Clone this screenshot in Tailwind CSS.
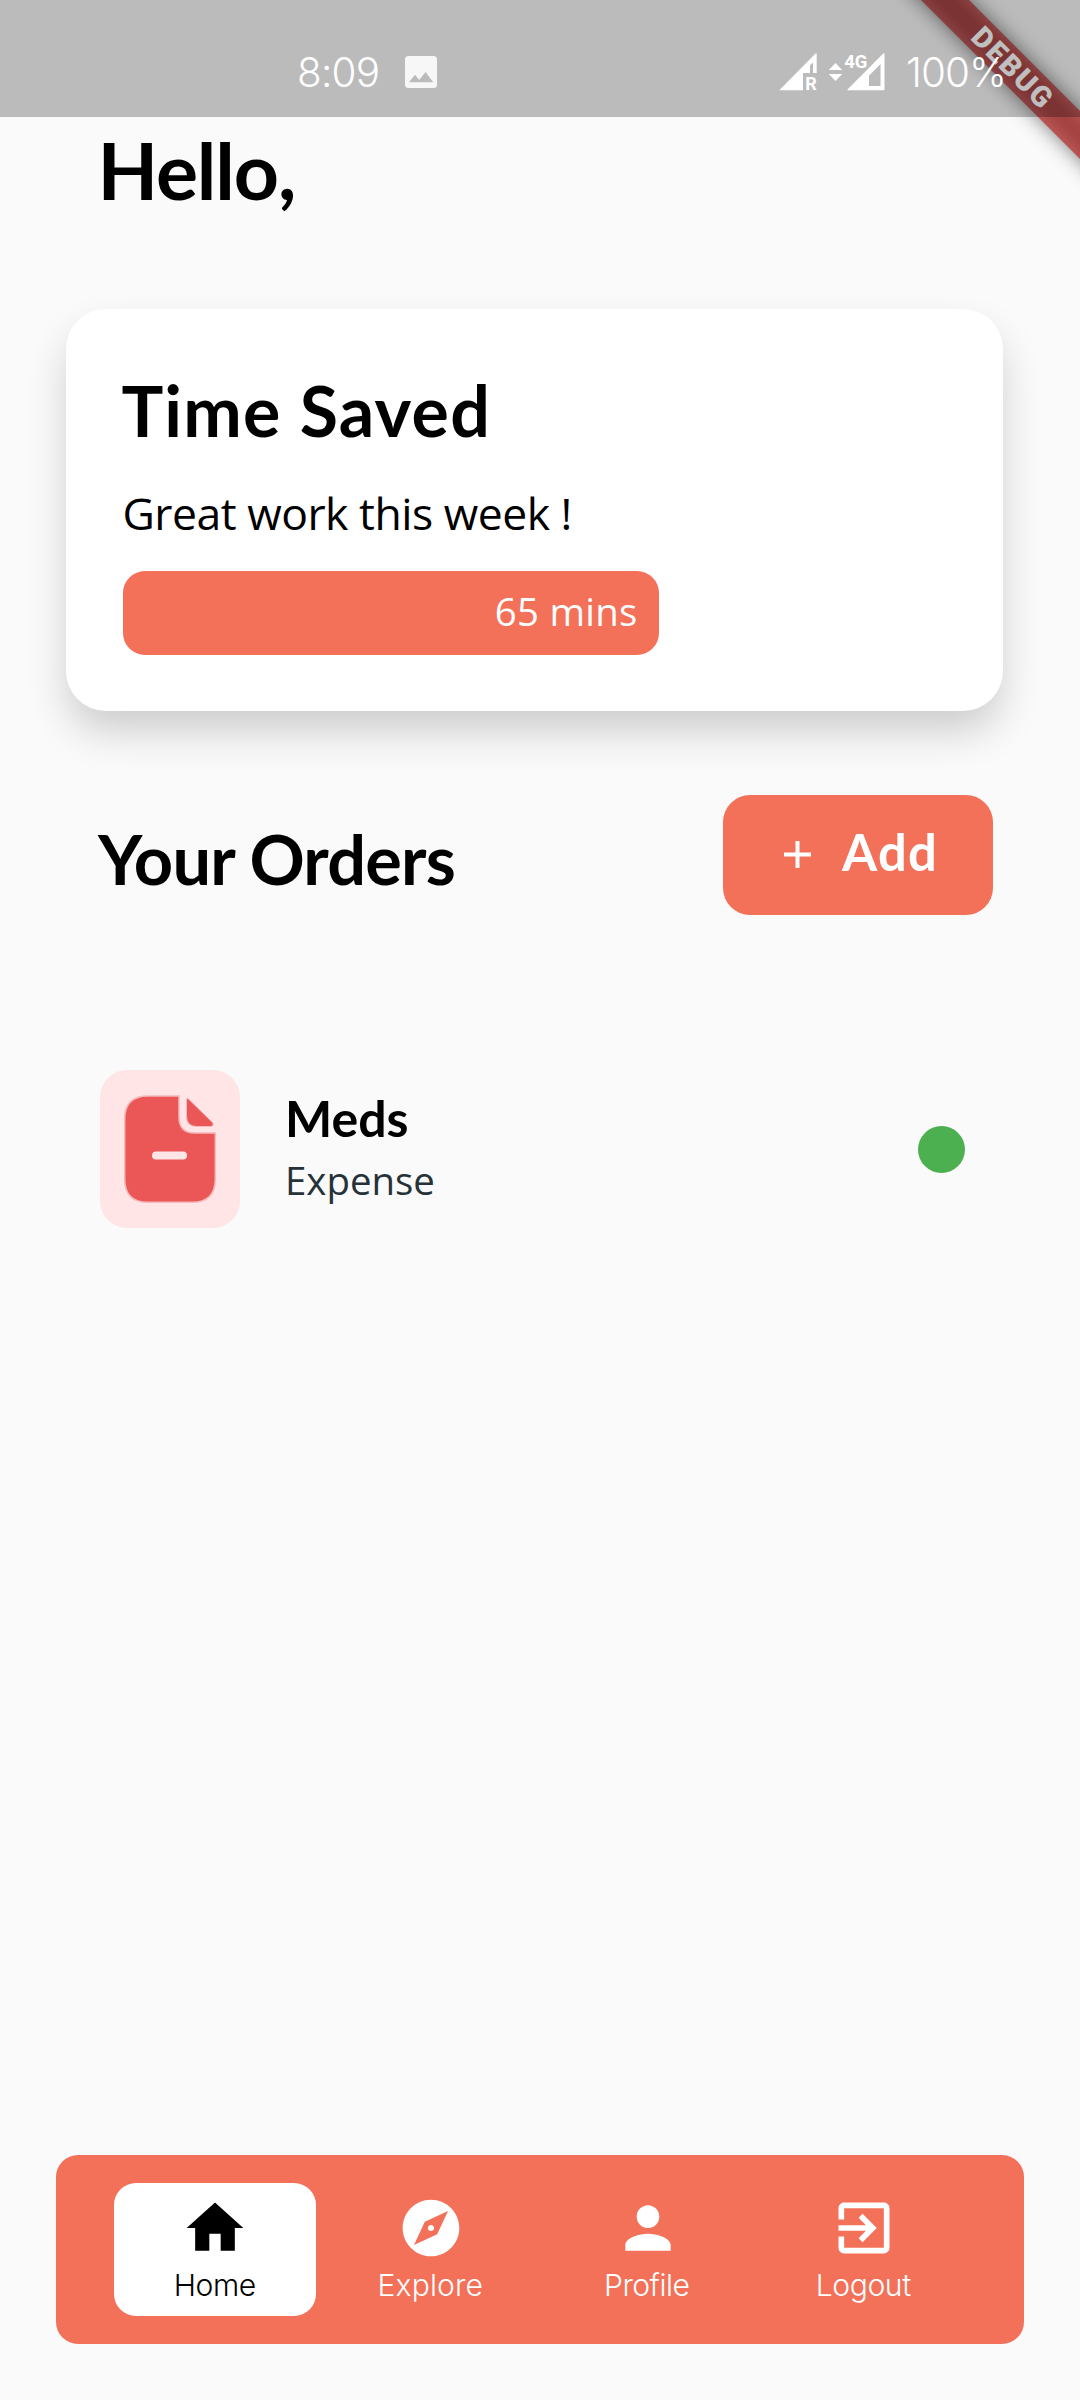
<!DOCTYPE html>
<html lang="en">
<head>
<meta charset="utf-8">
<title>Home</title>
<script src="https://cdn.jsdelivr.net/npm/@tailwindcss/browser@4"></script>
</head>
<body class="bg-[#fafafa] text-black">
<div class="relative flex h-[2400px] w-[1080px] flex-col overflow-hidden font-['Open_Sans',sans-serif]">

  <!-- Debug ribbon -->
  <div class="absolute left-[813px] top-[51px] h-[34px] w-[400px] rotate-45">
    <div class="absolute inset-0 bg-black/50 blur-[10px]"></div>
    <div class="absolute inset-0 flex items-center justify-center bg-[#b71c1c]/63 font-['Roboto',sans-serif] text-[29px] leading-none font-black tracking-[2px] text-white">DEBUG</div>
  </div>

  <!-- Status bar -->
  <header class="relative flex h-[117px] shrink-0 items-start bg-black/25 pt-[48px] pl-[297px] font-['Inter',sans-serif] text-[40.4px] leading-[49px] font-light text-white">
    <span class="w-[108px] tracking-[-0.8px]">8:09</span>
    <svg class="mt-2 size-8" viewBox="0 0 32 32"><path fill="#f7f7f7" fill-rule="evenodd" d="M3.5 0h25A3.5 3.5 0 0 1 32 3.500v25a3.500 3.500 0 0 1-3.500 3.500h-25A3.500 3.500 0 0 1 0 28.500v-25A3.500 3.500 0 0 1 3.500 0zM4 26.300h24.300L20.500 16l-6.300 8-4.200-5.300z"/></svg>
    <svg class="mt-[3px] ml-[342px] h-[48px] w-[110px]" viewBox="780 51 110 48" fill="#fff">
      <path fill-rule="evenodd" d="M780.500 90 816.500 53.500Q817.700 52.500 817.700 54.500V73H814V62.500L811 65.500V73H804V90.300H781Q779.700 90.300 780.500 90z"/>
      <text x="806.300" y="90.300" font-family="Roboto" font-weight="700" font-size="18">R</text>
      <path d="M836.500 63l6.700 7h-13.400zM829.800 74h13.400l-6.700 7z"/>
      <text x="845.300" y="67.500" font-family="Roboto" font-weight="700" font-size="18.500" textLength="23">4G</text>
      <path fill-rule="evenodd" d="M848.500 89.500 884 53.700Q885.500 52.500 885.500 54.500V89Q885.500 90.300 884 90.300H849Q848 90.300 848.500 89.500zM870 75.700V86H881.500V64z"/>
    </svg>
    <span class="ml-[17px] tracking-[-0.9px]">100%</span>
  </header>

  <main class="relative flex flex-col">
    <h1 class="mt-[5px] ml-[97.5px] font-['Lato',sans-serif] text-[78.8px] leading-[95px] font-bold tracking-[-1.1px]">Hello,</h1>

    <section class="mt-[92px] ml-[66px] h-[402px] w-[937px] rounded-[40px] bg-white pt-[59px] pl-[56.5px] shadow-[0_22px_42px_-3px_rgba(0,0,0,0.19)]">
      <h2 class="-ml-px font-['Lato',sans-serif] text-[69.9px] leading-[84px] font-bold tracking-[1.2px]">Time Saved</h2>
      <p class="mt-[30px] text-[44.5px] leading-[61px] tracking-[-0.5px]">Great work this week !</p>
      <div class="mt-[28px] flex h-[84px] w-[536px] items-center justify-end rounded-[22px] bg-[#f37159] pr-[21px] pb-1 text-[38.4px] leading-[52px] tracking-[0.25px] text-white">65 mins</div>
    </section>

    <div class="mt-[83.5px] flex h-[120px] items-start justify-between pr-[87px] pl-[98px]">
      <h2 class="mt-[22.5px] font-['Lato',sans-serif] text-[68.5px] leading-[83px] font-bold tracking-[-0.8px]">Your Orders</h2>
      <button class="flex h-[120px] w-[270px] items-center gap-[31px] rounded-[27px] bg-[#f37159] pl-[61px] text-white">
        <svg class="size-[27px]" viewBox="0 0 27 27"><path d="M13.500 0v27M0 13.500h27" stroke="#fff" stroke-width="4"/></svg>
        <span class="mb-[6px] font-['Lato',sans-serif] text-[50.7px] leading-[61px] font-bold tracking-[1.29px]">Add</span>
      </button>
    </div>

    <article class="mt-[155.5px] flex h-[158px] items-center pr-[115px] pl-[100px]">
      <div class="flex h-[158px] w-[140px] items-center justify-center rounded-[27px] bg-[#ffe5e6]">
        <svg class="h-[108px] w-[92px]" viewBox="0 0 92 108" fill="#eb5757" stroke="#f4b9bb" stroke-width="1.500">
          <path d="M24 1H55V22Q55 38 71 38H91.300V84Q91.300 107.300 68 107.300H24Q.7 107.300 .7 84V24Q.7 1 24 1z"/>
          <path d="M63 3.500Q64 3.500 65 4.500L89 28Q90 31 87 31.500H73Q62.500 31.500 62.500 21V4z" stroke-width="1"/>
          <path d="M32 60.500H59" stroke="#ffe5e6" stroke-width="8" stroke-linecap="round"/>
        </svg>
      </div>
      <div class="ml-[45px] flex-1">
        <h3 class="font-['Lato',sans-serif] text-[50px] leading-[60px] font-bold">Meds</h3>
        <p class="mt-1.5 mb-1 text-[38.4px] leading-[52px] text-[#263238]">Expense</p>
      </div>
      <span class="size-[47px] rounded-full bg-[#4caf50]"></span>
    </article>
  </main>

  <nav class="mt-auto mb-[56.5px] ml-[56px] flex h-[188.5px] w-[968px] gap-[14px] rounded-[22px] bg-[#f37159] pt-[28px] pl-[57.5px] font-['Inter',sans-serif] text-[30.1px] leading-[36px] font-light text-white">
    <a class="flex h-[132.5px] w-[202.5px] flex-col items-center gap-[5px] rounded-[22px] bg-white pt-[11px] text-black">
      <svg class="size-[68px]" viewBox="0 0 24 24" fill="currentColor"><path d="M10 20v-6h4v6h5v-8h3L12 3 2 12h3v8z"/></svg>
      <span class="tracking-[-0.48px]">Home</span>
    </a>
    <a class="flex h-[132.5px] w-[202.5px] flex-col items-center gap-[5px] pt-[11px]">
      <svg class="size-[68px]" viewBox="0 0 24 24" fill="currentColor"><path d="M12 10.900c-.61 0-1.100.49-1.100 1.100s.49 1.100 1.100 1.100c.61 0 1.100-.49 1.100-1.100s-.49-1.100-1.100-1.100zM12 2C6.480 2 2 6.480 2 12s4.480 10 10 10 10-4.480 10-10S17.520 2 12 2zm2.190 12.190L6 18l3.810-8.190L18 6l-3.810 8.190z"/></svg>
      <span class="mr-[2px] tracking-[0.12px]">Explore</span>
    </a>
    <a class="flex h-[132.5px] w-[202.5px] flex-col items-center gap-[5px] pt-[11px]">
      <svg class="size-[68px]" viewBox="0 0 24 24" fill="currentColor"><path d="M12 12c2.210 0 4-1.790 4-4s-1.790-4-4-4-4 1.790-4 4 1.790 4 4 4zm0 2c-2.670 0-8 1.340-8 4v2h16v-2c0-2.660-5.330-4-8-4z"/></svg>
      <span class="mr-[2px] tracking-[-0.51px]">Profile</span>
    </a>
    <a class="flex h-[132.5px] w-[202.5px] flex-col items-center gap-[5px] pt-[11px]">
      <svg class="size-[68px]" viewBox="0 0 24 24" fill="currentColor"><path d="M10.090 15.590L11.500 17l5-5-5-5-1.410 1.410L12.670 11H3v2h9.670l-2.580 2.590zM19 3H5c-1.110 0-2 .9-2 2v4h2V5h14v14H5v-4H3v4c0 1.100.89 2 2 2h14c1.100 0 2-.9 2-2V5c0-1.100-.9-2-2-2z"/></svg>
      <span class="mr-[2px] tracking-[-0.42px]">Logout</span>
    </a>
  </nav>
</div>
</body>
</html>
